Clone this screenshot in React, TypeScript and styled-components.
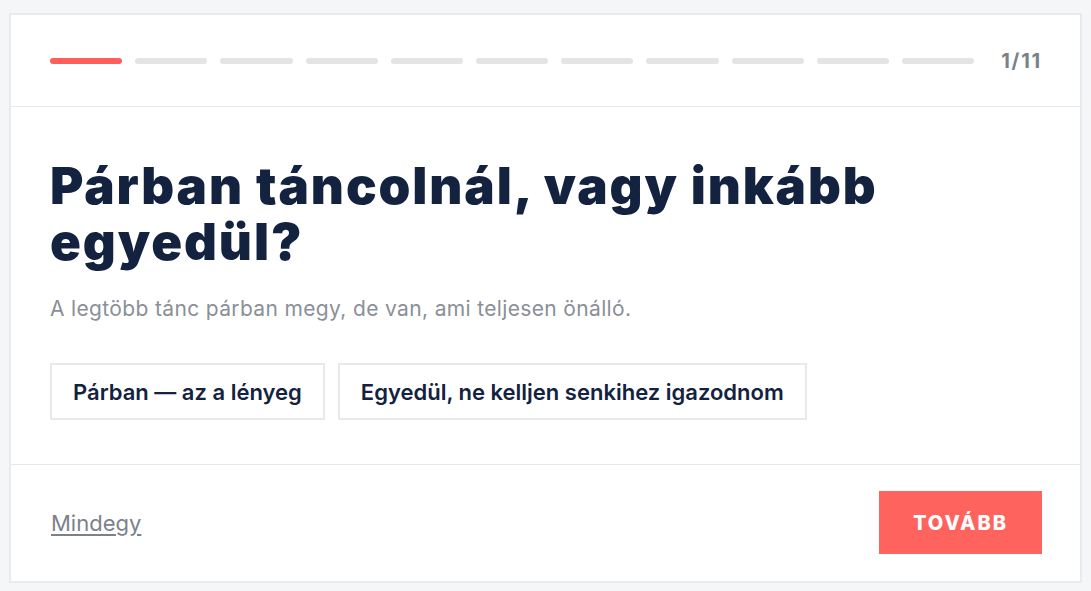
import { FC } from "react"
import styled, { createGlobalStyle } from "styled-components"

const GlobalStyle = createGlobalStyle`
  html, body {
    margin: 0;
    padding: 0;
    background: #f5f6f8;
    font-family: Inter, "Noto Sans", "Liberation Sans", sans-serif;
  }
  * {
    box-sizing: border-box;
  }
`

const Page = styled.div`
  padding: 13px 9px 8px;
`

const Card = styled.section`
  background: #ffffff;
  border: 2px solid #e8eaed;
  display: flex;
  flex-direction: column;
`

const Header = styled.header`
  height: 92px;
  display: flex;
  align-items: center;
  gap: 27px;
  padding: 0 38px 0 39px;
  border-bottom: 1px solid #e6e8eb;
`

const Progress = styled.div`
  flex: 1;
  display: flex;
  gap: 13px;
`

const Segment = styled.span<{ active?: boolean }>`
  flex: 1;
  height: 6px;
  border-radius: 3px;
  background: ${({ active }) => (active ? "#ff5e5b" : "#e3e4e6")};
`

const Counter = styled.span`
  font-size: 20px;
  font-weight: 700;
  color: #7b8089;
  letter-spacing: 1.8px;
`

const Body = styled.div`
  padding: 51px 39px 44px;
  border-bottom: 1px solid #e6e8eb;
`

const Title = styled.h1`
  margin: 0;
  font-size: 51px;
  line-height: 56px;
  font-weight: 900;
  letter-spacing: 1.9px;
  color: #13223f;
  max-width: 900px;
`

const Subtitle = styled.p`
  margin: 25px 0 0;
  font-size: 21px;
  line-height: 27px;
  letter-spacing: 0.35px;
  color: #8a8f98;
`

const Options = styled.div`
  display: flex;
  gap: 13px;
  margin-top: 41px;
`

const Option = styled.button`
  height: 57px;
  padding: 0 21px;
  background: #ffffff;
  border: 2px solid #e8e9eb;
  border-radius: 0;
  font-family: inherit;
  font-size: 22px;
  font-weight: 600;
  color: #13223f;
  cursor: pointer;
`

const Footer = styled.footer`
  display: flex;
  align-items: center;
  justify-content: space-between;
  padding: 26px 38px 27px 40px;
`

const SkipLink = styled.a`
  font-size: 22px;
  color: #7b828c;
  text-decoration: underline;
  text-underline-offset: 3px;
  text-decoration-thickness: 2px;
  cursor: pointer;
`

const NextButton = styled.button`
  width: 163px;
  height: 63px;
  background: #ff635d;
  border: 0;
  color: #ffffff;
  font-family: inherit;
  font-size: 20px;
  font-weight: 800;
  letter-spacing: 2px;
  text-transform: uppercase;
  cursor: pointer;
`

const STEPS = 11
const OPTIONS = ["Párban — az a lényeg", "Egyedül, ne kelljen senkihez igazodnom"]

const App: FC = () => (
  <Page>
    <GlobalStyle />
    <Card>
      <Header>
        <Progress>
          {Array.from({ length: STEPS }, (_, i) => (
            <Segment key={i} active={i === 0} />
          ))}
        </Progress>
        <Counter>1/{STEPS}</Counter>
      </Header>
      <Body>
        <Title>Párban táncolnál, vagy inkább egyedül?</Title>
        <Subtitle>A legtöbb tánc párban megy, de van, ami teljesen önálló.</Subtitle>
        <Options>
          {OPTIONS.map((label) => (
            <Option key={label}>{label}</Option>
          ))}
        </Options>
      </Body>
      <Footer>
        <SkipLink>Mindegy</SkipLink>
        <NextButton>Tovább</NextButton>
      </Footer>
    </Card>
  </Page>
)

export default App
